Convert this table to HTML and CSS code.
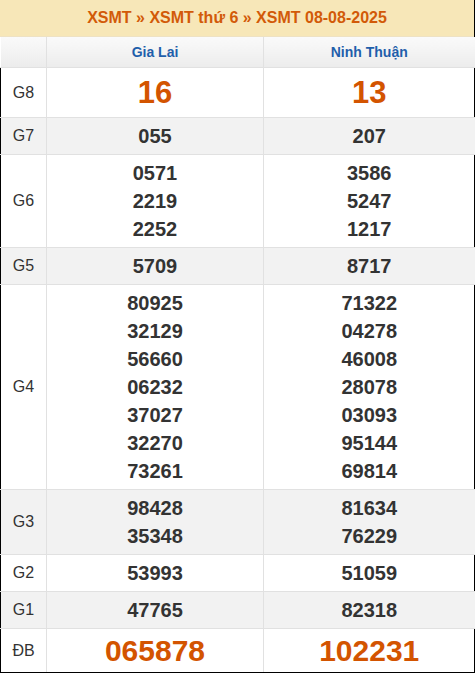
FILE: index.html
```html
<!DOCTYPE html>
<html lang="vi">
<head>
<meta charset="utf-8">
<title>XSMT 08-08-2025</title>
<link rel="stylesheet" href="styles.css">
</head>
<body>
<div class="board">
  <h1 class="title">XSMT » XSMT thứ 6 » XSMT 08-08-2025</h1>
  <table class="results">
    <colgroup>
      <col class="c-label">
      <col class="c-prov">
      <col class="c-prov2">
    </colgroup>
    <thead>
      <tr class="provinces">
        <th></th>
        <th>Gia Lai</th>
        <th>Ninh Thuận</th>
      </tr>
    </thead>
    <tbody>
      <tr class="big">
        <td class="label">G8</td>
        <td class="num">16</td>
        <td class="num">13</td>
      </tr>
      <tr class="alt">
        <td class="label">G7</td>
        <td class="num">055</td>
        <td class="num">207</td>
      </tr>
      <tr>
        <td class="label">G6</td>
        <td class="num"><div>0571</div><div>2219</div><div>2252</div></td>
        <td class="num"><div>3586</div><div>5247</div><div>1217</div></td>
      </tr>
      <tr class="alt">
        <td class="label">G5</td>
        <td class="num">5709</td>
        <td class="num">8717</td>
      </tr>
      <tr>
        <td class="label">G4</td>
        <td class="num"><div>80925</div><div>32129</div><div>56660</div><div>06232</div><div>37027</div><div>32270</div><div>73261</div></td>
        <td class="num"><div>71322</div><div>04278</div><div>46008</div><div>28078</div><div>03093</div><div>95144</div><div>69814</div></td>
      </tr>
      <tr class="alt">
        <td class="label">G3</td>
        <td class="num"><div>98428</div><div>35348</div></td>
        <td class="num"><div>81634</div><div>76229</div></td>
      </tr>
      <tr>
        <td class="label">G2</td>
        <td class="num">53993</td>
        <td class="num">51059</td>
      </tr>
      <tr class="alt">
        <td class="label">G1</td>
        <td class="num">47765</td>
        <td class="num">82318</td>
      </tr>
      <tr class="special">
        <td class="label">ĐB</td>
        <td class="num">065878</td>
        <td class="num">102231</td>
      </tr>
    </tbody>
  </table>
</div>
</body>
</html>
```
FILE: styles.css
```css
html, body {
  margin: 0;
  padding: 0;
  background: #fff;
}
body {
  font-family: "Liberation Sans", Arial, sans-serif;
  color: #333;
}
.board {
  width: 474px;
  border-right: 1px solid #000;
  border-bottom: 1px solid #000;
}
.title {
  margin: 0;
  height: 36px;
  line-height: 36px;
  background: #f7e7b8;
  color: #d25a08;
  font-size: 16px;
  font-weight: bold;
  text-align: center;
  border-bottom: 1px solid #eee2c4;
}
.results {
  width: 474px;
  border-collapse: collapse;
  table-layout: fixed;
}
.c-label { width: 46px; }
.c-prov { width: 217px; }
.c-prov2 { width: 211px; }
.results th,
.results td {
  border: 1px solid #e1e1e1;
  padding: 0;
  text-align: center;
  vertical-align: middle;
}
.results tr > :first-child { border-left: none; }
.results tr > :last-child { border-right: none; }
.provinces th {
  height: 30px;
  background: linear-gradient(#fafafa, #ececec);
  color: #1f5fab;
  font-size: 14px;
  font-weight: bold;
  border-top: none;
}
.provinces th:first-child { border-left: none; }
.results tbody td.label {
  border-left: 1px solid #000;
  font-size: 16px;
  color: #333;
}
.num {
  padding: 4px 0;
  font-size: 20px;
  font-weight: bold;
  line-height: 28px;
  color: #333;
}
.results td.num { padding: 4px 0; }
.alt td { background: #f2f2f2; }
.big .num {
  font-size: 31px;
  line-height: 41px;
  color: #d35400;
}
.special .num {
  font-size: 30px;
  line-height: 35px;
  color: #d35400;
}
.results tbody tr.special td { border-bottom: none; }
```
